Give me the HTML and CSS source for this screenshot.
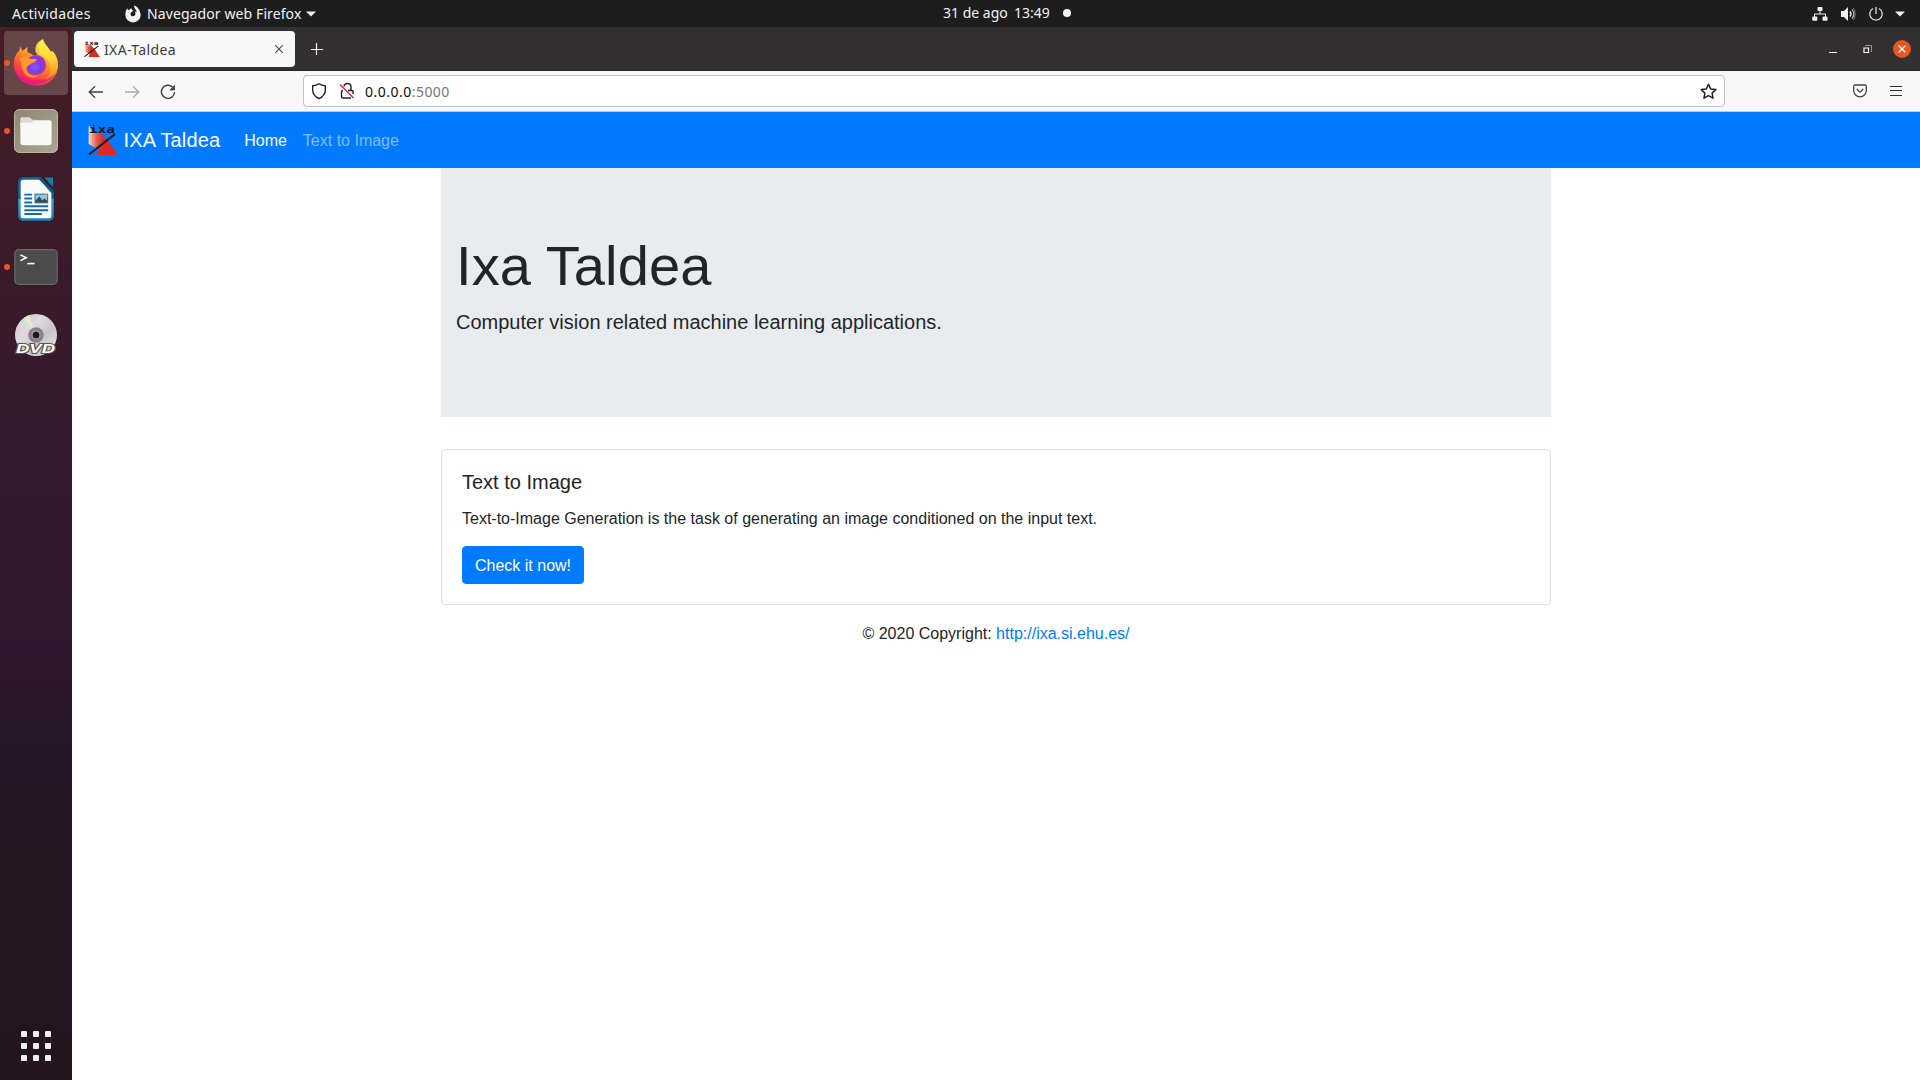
FILE: index.html
```html
<!DOCTYPE html>
<html lang="es">
<head>
<meta charset="utf-8">
<title>IXA-Taldea</title>
<link rel="stylesheet" href="styles.css">
</head>
<body>
<svg width="0" height="0" class="defs" aria-hidden="true">
  <defs>
    <linearGradient id="ixaRed" gradientUnits="userSpaceOnUse" x1="0" y1="0" x2="15" y2="0"><stop offset="0" stop-color="#fff"/><stop offset=".25" stop-color="#f0a59b"/><stop offset=".6" stop-color="#df5a4c"/><stop offset="1" stop-color="#dc2a24"/></linearGradient>
    <linearGradient id="fox" x1=".8" y1="0" x2=".25" y2="1"><stop offset="0" stop-color="#fff44f"/><stop offset=".3" stop-color="#ffc32e"/><stop offset=".55" stop-color="#ff7a28"/><stop offset=".8" stop-color="#ff3750"/><stop offset="1" stop-color="#e31587"/></linearGradient>
    <linearGradient id="flame" x2=".2" y2="1"><stop offset="0" stop-color="#fff44f"/><stop offset=".6" stop-color="#ffd83a"/><stop offset="1" stop-color="#ff9628"/></linearGradient>
    <radialGradient id="globe" cx=".45" cy=".6"><stop offset="0" stop-color="#8a55ff"/><stop offset=".6" stop-color="#7a3fe0"/><stop offset="1" stop-color="#a133c8"/></radialGradient>
    <linearGradient id="writer" x2="0" y2="1"><stop offset="0" stop-color="#0d69a0"/><stop offset=".5" stop-color="#0d69a0"/><stop offset=".5" stop-color="#3fa0d4"/><stop offset="1" stop-color="#1f80b8"/></linearGradient>
    <linearGradient id="files" x2="1" y2="1"><stop offset="0" stop-color="#8d8672"/><stop offset="1" stop-color="#aaa694"/></linearGradient>
    <linearGradient id="disc" x2="1" y2="1"><stop offset="0" stop-color="#c4c4c4"/><stop offset=".35" stop-color="#dedbe0"/><stop offset=".6" stop-color="#c8c8c8"/><stop offset="1" stop-color="#e2e2e2"/></linearGradient>
    <symbol id="ixa" viewBox="0 0 30 30">
      <path d="M.7 0 5 8H13.500L19.500 15.500 9 24 .7 19z" fill="url(#ixaRed)"/>
      <path d="M8.500 30 12 21 19 14.500 30 30z" fill="#dc2a24"/>
      <path d="M1 29.500 27 9" stroke="#1c1719" stroke-width="2"/>
      <text x="1" y="7.500" class="ixa-word" textLength="26" lengthAdjust="spacingAndGlyphs">ixa</text>
    </symbol>
  </defs>
</svg>

<header class="topbar">
  <span class="activities">Actividades</span>
  <span class="appmenu">
    <svg width="16" height="18" viewBox="0 0 16 18"><path d="M8 17.500a7.600 7.300 0 0 1-7.600-7.300C.3 7.500 1 5 2.300 3.300l.7 1.800 1.500-.3L6.200 3c.1 1.200 1 2 2.100 2.600L6.500 7.300c-1 .7-1.200 1.700-.8 2.700.6 1.500 3 1.700 4.200.3 1-1.200.7-2.700-.4-3.700 1-.1 1.600.3 2.100.9C11.800 5 9 4 9.200.6c2.300.6 6.400 3.900 6.400 9.600A7.600 7.300 0 0 1 8 17.500z" fill="#f2f2f2"/></svg>
    <span class="appname">Navegador web Firefox</span>
    <svg width="10" height="6" viewBox="0 0 10 6"><path d="M0 .5h10L5 5.500z" fill="#f2f2f2"/></svg>
  </span>
  <span class="clock"><span class="date">31 de ago</span><span class="time">13:49</span><i class="notice"></i></span>
  <span class="status">
    <svg width="16" height="14" viewBox="0 0 16 14" fill="#f2f2f2"><rect x="5.500" width="5" height="4" rx="1"/><rect x=".3" y="9.500" width="5" height="4.300" rx="1"/><rect x="10.500" y="9.500" width="5" height="4.300" rx="1"/><path d="M8 4v3M2.500 10V7h11v3" fill="none" stroke="#f2f2f2"/></svg>
    <svg width="16" height="14" viewBox="0 0 16 14"><path d="M0 4h3l4-4v14l-4-4H0z" fill="#f2f2f2"/><path d="M9 4.500q2 2.500 0 5" fill="none" stroke="#f2f2f2" stroke-width="1.300"/><path d="M11 2.500q3.500 4.500 0 9" fill="none" stroke="#bbb" stroke-width="1.200"/><path d="M12.500 1q3.500 6 0 12" fill="none" stroke="#777"/></svg>
    <svg width="14" height="14" viewBox="0 0 14 14" fill="none" stroke="#e0e0e0" stroke-width="1.300"><path d="M4 1.500a6.200 6.200 0 1 0 6 0M7 0v7"/></svg>
    <svg width="10" height="6" viewBox="0 0 10 6"><path d="M0 .5h10L5 5.500z" fill="#f2f2f2"/></svg>
  </span>
</header>

<div class="desktop">
  <aside class="dock">
    <div class="slot focused running">
      <svg width="46" height="48" viewBox="0 0 46 48">
        <path d="M23 46.500C10 46.500.8 37 .8 25c0-7 3-11 5.200-13l1.500-4.500L9.500 12l5-4-.2 5 7.700 4 5-4c-3-6-1-11 3-13 1 5 5 7 8 13l1-1c4 5 6 9 6 14 0 12-9 20.500-22 20.500z" fill="url(#fox)"/>
        <path d="M23 14c-2-6 1-11.500 7-13.500 1 5 5 7.500 8 12.500l1.500-1C44 16 46 24 44 30c-2 8-8 11-13 11 6-4 7-9 6-14-1-7-7-10-14-13z" fill="url(#flame)" opacity=".85"/>
        <circle cx="23" cy="26" r="10" fill="url(#globe)"/>
        <path d="M6 20c3-2 7-2.500 10-.5 3 1 6 0 8 1-1 3-5 3-7 5-2 1-3 2-4 4 1 6 6 8 12 7-4 4-13 2-15-5-2-5-1-8-4-11.500z" fill="#ff9a2e"/>
        <path d="M2 31c3 10 12 15 22 14 9 0 16-5 19-11-5 4-10 7-19 7-10 1-18-3-22-10z" fill="#e5177f" opacity=".65"/>
      </svg>
    </div>
    <div class="slot running">
      <svg width="44" height="44" viewBox="0 0 45 45"><rect x=".5" y=".5" width="44" height="44" rx="5" fill="url(#files)" stroke="#c0baa6"/><path d="M6.500 11a2 2 0 0 1 2-2.500H16l2.500 2.500H22v7H6.500z" fill="#dedbd0"/><path d="M6.500 14H18l4-2.500h14.500a2 2 0 0 1 2 2V34a3 3 0 0 1-3 3h-26a3 3 0 0 1-3-3z" fill="#f8f8f6"/></svg>
    </div>
    <div class="slot">
      <svg width="36" height="44" viewBox="0 0 37 45"><path d="M5 1.500h18L35.500 16v24a3.500 3.500 0 0 1-3.500 3.500H5A3.500 3.500 0 0 1 1.500 40V5A3.500 3.500 0 0 1 5 1.500z" fill="#fafafa" stroke="url(#writer)" stroke-width="2.500"/><path d="M22 1 36 15" stroke="#0b5688" stroke-width="2.500"/><path d="M27 .5h9v10z" fill="#1b79ae"/><path d="M6.500 18h8M6.500 22h8M6.500 26h8M6.500 30h24.500M6.500 34h24.500M6.500 38h18" stroke="#126ca4" stroke-width="2"/><rect x="17.500" y="17.500" width="13" height="9" fill="#87c8ed" stroke="#126ca4"/><path d="M18 26v-2l4-4 3 4 2-2 3 2v2z" fill="#434343"/><path d="M27 18h3v3z" fill="#f8c633"/></svg>
    </div>
    <div class="slot running">
      <svg width="44" height="36" viewBox="0 0 45 37"><rect x=".7" y=".7" width="43.600" height="35.600" rx="4" fill="#4b4b4b" stroke="#696969" stroke-width="1.200"/><path d="m6.500 6 6 3-6 3" fill="none" stroke="#fff" stroke-width="1.600"/><path d="M13.500 15h7.500" stroke="#fff" stroke-width="1.600"/></svg>
    </div>
    <div class="slot">
      <svg width="44" height="44" viewBox="0 0 44 44"><circle cx="22" cy="22" r="21" fill="url(#disc)"/><path d="M22 22 5 10l5-5z" fill="#c4efd7" opacity=".65"/><path d="M22 22 2 16l3-6z" fill="#f2cddd" opacity=".8"/><path d="M22 22 10 5l5-3z" fill="#f0ead0" opacity=".8"/><circle cx="22" cy="22" r="6" fill="none" stroke="#8b808a" stroke-width="3.500"/><circle cx="22" cy="22" r="3.500" fill="#231421"/><text x="2" y="39.500" class="dvd" textLength="39" lengthAdjust="spacingAndGlyphs">DVD</text></svg>
    </div>
    <div class="apps"><i></i><i></i><i></i><i></i><i></i><i></i><i></i><i></i><i></i></div>
  </aside>

  <section class="window">
    <div class="tabs">
      <div class="tab">
        <svg class="favicon" width="16" height="16"><use href="#ixa"/></svg>
        <span class="tab-title">IXA-Taldea</span>
        <svg width="10" height="10" viewBox="0 0 10 10"><path d="m1.200 1.200 7.600 7.600m0-7.600L1.200 8.800" stroke="#4b4b4b" stroke-width="1.100"/></svg>
      </div>
      <svg class="newtab" width="12" height="12" viewBox="0 0 12 12"><path d="M5.500 0v12M0 6.500h12" stroke="#f3f3f3" stroke-width="1.200"/></svg>
      <div class="controls">
        <svg width="8" height="14" viewBox="0 0 8 14"><path d="M0 10.500h8" stroke="#fff"/></svg>
        <svg width="9" height="9" viewBox="0 0 9 9" fill="none"><path d="M2 .5h6.500V7" stroke="#999"/><path d="M1 3h4.500v4.500H1z" stroke="#fff" stroke-width="1.200"/></svg>
        <svg width="18" height="18" viewBox="0 0 18 18"><circle cx="9" cy="9" r="9" fill="#e95420"/><path d="m5.500 5.500 7 7m0-7-7 7" stroke="#fff" stroke-width="1.300"/></svg>
      </div>
    </div>

    <div class="toolbar">
      <div class="history">
        <svg width="16" height="16" viewBox="0 0 16 16" fill="none" stroke="#3f3f3f" stroke-width="1.300"><path d="M15 8H1.500M7 2.300 1.300 8 7 13.700"/></svg>
        <svg width="16" height="16" viewBox="0 0 16 16" fill="none" stroke="#aaa" stroke-width="1.300"><path d="M1 8h13.500M9 2.300 14.700 8 9 13.700"/></svg>
        <svg width="16" height="16" viewBox="0 0 16 16" fill="none" stroke="#3f3f3f" stroke-width="1.400"><path d="M12.500 3A6.600 6.600 0 1 0 14.600 8"/><path d="M14.500 1.500V6H10z" fill="#3f3f3f" stroke-width=".8"/></svg>
      </div>
      <div class="urlbar">
        <svg width="16" height="18" viewBox="0 0 16 18" fill="none" stroke="#222" stroke-width="1.400"><path d="M8 1.700c1.700 1.300 3.600 1.900 6.300 2v4c0 4-2.300 7-6.300 9-4-2-6.300-5-6.300-9v-4C4.400 3.600 6.300 3 8 1.700z" stroke-linejoin="round"/></svg>
        <svg width="16" height="18" viewBox="0 0 16 18" fill="none" stroke="#222" stroke-width="1.400"><path d="M5 4.500c.5-4 6.500-4 7 0V8M9 8.500h4a1 1 0 0 1 1 1V12M12 16H4a1.500 1.500 0 0 1-1.500-1.500V10A1.500 1.500 0 0 1 4 8.500"/><path d="m1 2.500 13.500 13.500" stroke="#e22850" stroke-width="1.500"/></svg>
        <span class="url"><b>0.0.0.0</b>:5000</span>
        <svg class="star" width="17" height="17" viewBox="0 0 17 17"><path d="m8.500 1.300 2.200 4.600 5.100.7-3.700 3.500.9 5.100-4.500-2.500L4 15.200l.9-5.100-3.700-3.500 5.100-.7z" fill="none" stroke="#222" stroke-width="1.500" stroke-linejoin="round"/></svg>
      </div>
      <svg class="pocket" width="14" height="14" viewBox="0 0 14 14" fill="none" stroke="#444" stroke-width="1.300"><path d="M2 1h10a1.300 1.300 0 0 1 1.300 1.300V6.500a6.300 6.300 0 0 1-12.600 0V2.300A1.300 1.300 0 0 1 2 1z"/><path d="m3.700 5 3.300 3.200L10.300 5"/></svg>
      <svg class="menu" width="12" height="10" viewBox="0 0 12 10"><path d="M0 .5h12M0 4.500h12M0 9.500h12" stroke="#333" stroke-width="1.200"/></svg>
    </div>

    <nav class="navbar">
      <a class="brand"><svg width="30" height="30"><use href="#ixa"/></svg><span>IXA Taldea</span></a>
      <a class="link active">Home</a>
      <a class="link">Text to Image</a>
    </nav>

    <main class="container">
      <div class="jumbotron">
        <h1>Ixa Taldea</h1>
        <p>Computer vision related machine learning applications.</p>
      </div>
      <div class="card">
        <h5>Text to Image</h5>
        <p>Text-to-Image Generation is the task of generating an image conditioned on the input text.</p>
        <a class="btn">Check it now!</a>
      </div>
    </main>
    <footer class="footer">© 2020 Copyright: <a>http://ixa.si.ehu.es/</a></footer>
  </section>
</div>
</body>
</html>
```
FILE: styles.css
```css
* { box-sizing: border-box; }
body {
  margin: 0;
  width: 1920px;
  height: 1080px;
  overflow: hidden;
  display: flex;
  flex-direction: column;
  background: #fff;
  color: #212529;
  font: 16px/1.5 "Liberation Sans", sans-serif;
}
svg { display: block; flex: none; }
.defs { position: absolute; }
.ixa-word { font: bold 10px "DejaVu Sans Mono", monospace; fill: #1c1719; }
.dvd { font: italic bold 13px "Liberation Sans", sans-serif; fill: #fff; stroke: #555; stroke-width: 2px; paint-order: stroke; }

/* GNOME top bar */
.topbar {
  height: 27px;
  flex: none;
  display: grid;
  grid-template-columns: 113px 818px 1fr auto;
  align-items: center;
  padding: 0 14px 0 12px;
  background: #1d1d1d;
  color: #f2f2f2;
  font: 14px/26px "Noto Sans", sans-serif;
  white-space: nowrap;
}
.activities { letter-spacing: .36px; }
.appmenu { display: flex; align-items: center; }
.appname { width: 155px; margin: 0 4px 0 6px; letter-spacing: .1px; }
.clock { display: flex; align-items: center; height: 26px; margin-bottom: 1px; }
.date { width: 71px; }
.time { width: 45px; }
.notice { width: 8px; height: 8px; margin-left: 4px; border-radius: 50%; background: #f2f2f2; }
.status { display: flex; align-items: center; gap: 12px; padding-right: 1px; }
.status svg:nth-child(2) { margin-left: 1px; }

.desktop { flex: 1; display: flex; min-height: 0; }

/* Launcher */
.dock {
  width: 72px;
  display: flex;
  flex-direction: column;
  align-items: center;
  gap: 4px;
  padding: 4px 0 19px;
  background: linear-gradient(#451e26 0, #3b1a29 20%, #351a30 40%, #2f172e 57%, #281629 66%, #251624 80%, #22151d 100%);
}
.slot { position: relative; width: 64px; height: 64px; border-radius: 4px; display: grid; place-items: center; }
.focused { background: #674649; }
.running::before { content: ""; position: absolute; left: 0; top: 29px; width: 6px; height: 6px; border-radius: 50%; background: #e95420; }
.apps { margin-top: auto; display: grid; grid-template-columns: repeat(3, 6px); gap: 6px; }
.apps i { height: 6px; border-radius: 1px; background: #f0efec; }

/* Browser chrome */
.window { flex: 1; }
.tabs { height: 44px; display: flex; align-items: center; padding: 0 9px 0 2px; background: #323031; border-bottom: 1px solid #242223; }
.tab {
  width: 221px;
  height: 36px;
  display: flex;
  align-items: center;
  padding: 0 11px 0 10px;
  border-radius: 4px;
  background: #f8f8f8;
  color: #3c3c3c;
  font: 14px/34px "Noto Sans", sans-serif;
}
.favicon { margin-right: 4px; background: #fff; }
.tab-title { flex: 1; padding-top: 2px; letter-spacing: .36px; }
.newtab { margin-left: 16px; }
.controls { margin-left: auto; display: flex; align-items: center; }
.controls svg:nth-child(2) { margin: 1px 21px 0 26px; }
.toolbar {
  height: 41px;
  display: flex;
  align-items: center;
  padding: 0 18px 0 16px;
  background: #f8f8f8;
  border-bottom: 1px solid #c9c9c9;
}
.history { width: 215px; display: flex; gap: 20px; padding-top: 1px; }
.urlbar {
  width: 1422px;
  height: 32px;
  display: flex;
  align-items: center;
  padding: 0 7px;
  border: 1px solid #c0c0c0;
  border-radius: 4px;
  background: #fff;
}
.urlbar svg + svg { margin-left: 12px; }
.url { margin-left: 10px; padding-top: 1px; flex: 1; color: #767676; font: 14px/30px "Noto Sans", sans-serif; letter-spacing: .48px; }
.url b { font-weight: 400; color: #0c0c0d; }
.pocket { margin: 0 23px 0 auto; }

/* Page */
.navbar { height: 56px; display: flex; align-items: center; padding: 0 16px; background: #007bff; }
.brand { display: flex; align-items: center; margin-right: 16px; color: #fff; font-size: 20px; line-height: 30px; }
.brand span { margin-left: 5.6px; letter-spacing: .13px; }
.link { padding: 9px 8px 7px; color: rgba(255, 255, 255, .5); }
.active { color: #fff; }
.container { width: 1140px; margin: 0 auto; padding: 0 15px; }
.jumbotron { margin-bottom: 32px; padding: 64px 15px; background: #e9ecef; }
.jumbotron h1 { margin: 0 0 8px; font-size: 56px; font-weight: 400; line-height: 1.2; letter-spacing: .12px; }
.jumbotron p { margin: 0 0 16px; font-size: 20px; }
.card { padding: 20px; border: 1px solid #dfdfdf; border-radius: 4px; }
.card h5 { margin: 0 0 13px; font-size: 20px; font-weight: 400; line-height: 24px; }
.card p { margin: 0 0 15px; }
.btn { display: block; width: max-content; padding: 7px 12px 5px; border: 1px solid #007bff; border-radius: 4px; background: #007bff; color: #fff; }
.footer { padding: 17px 16px; text-align: center; }
.footer a { color: #007bff; }
```
